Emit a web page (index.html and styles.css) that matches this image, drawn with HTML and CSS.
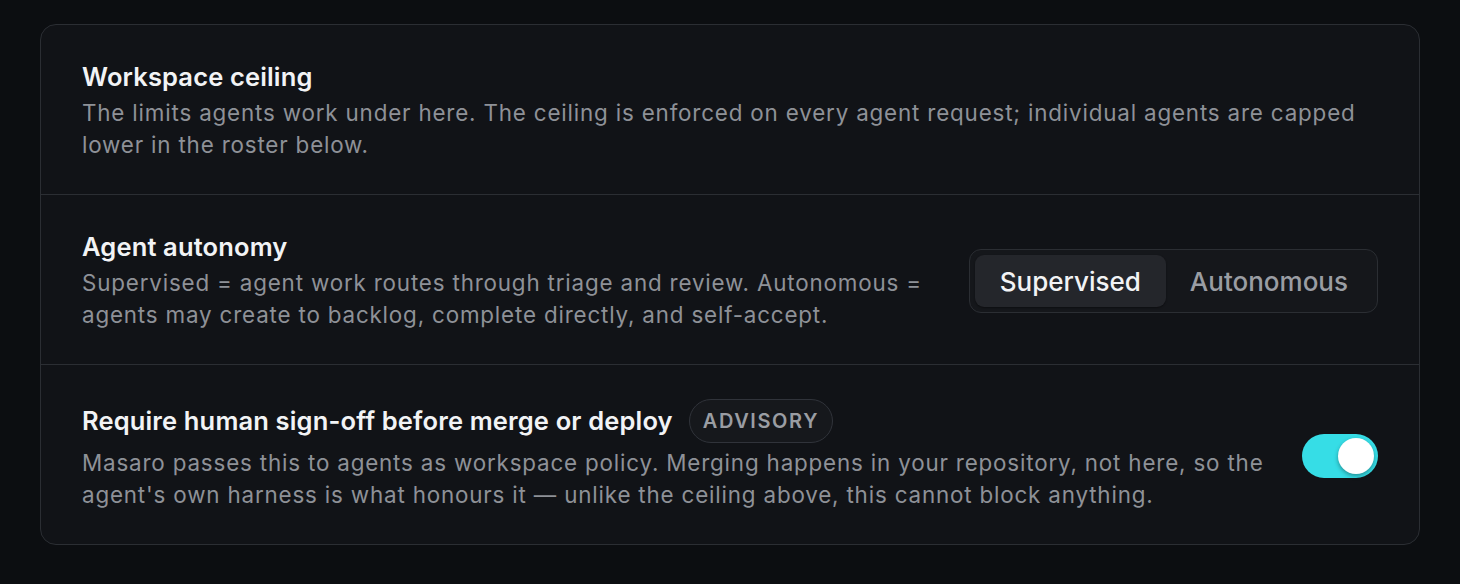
FILE: index.html
```html
<!DOCTYPE html>
<html lang="en">
<head>
<meta charset="utf-8">
<title>Workspace settings</title>
<link rel="stylesheet" href="styles.css">
</head>
<body>
<main class="page">
  <section class="card">
    <div class="row">
      <div class="text">
        <h3 class="title">Workspace ceiling</h3>
        <p class="desc">The limits agents work under here. The ceiling is enforced on every agent request; individual agents are capped lower in the roster below.</p>
      </div>
    </div>
    <div class="row">
      <div class="text narrow">
        <h3 class="title">Agent autonomy</h3>
        <p class="desc">Supervised = agent work routes through triage and review. Autonomous = agents may create to backlog, complete directly, and self-accept.</p>
      </div>
      <div class="segmented">
        <button class="seg active">Supervised</button>
        <button class="seg">Autonomous</button>
      </div>
    </div>
    <div class="row">
      <div class="text">
        <div class="title-line">
          <h3 class="title">Require human sign-off before merge or deploy</h3>
          <span class="badge">ADVISORY</span>
        </div>
        <p class="desc">Masaro passes this to agents as workspace policy. Merging happens in your repository, not here, so the agent's own harness is what honours it — unlike the ceiling above, this cannot block anything.</p>
      </div>
      <div class="toggle on"><span class="knob"></span></div>
    </div>
  </section>
</main>
</body>
</html>
```

FILE: styles.css
```css
* { box-sizing: border-box; }
html, body { margin: 0; padding: 0; }
body {
  background: #0c0e11;
  font-family: Inter, "Noto Sans", sans-serif;
  color: #f0f1f3;
}
.page { padding: 24px 40px; }
.card {
  background: #111317;
  border: 1px solid #2b2e33;
  border-radius: 16px;
  overflow: hidden;
}
.row {
  display: flex;
  align-items: center;
  justify-content: space-between;
  gap: 38px;
  padding: 36px 41px 33px;
  border-top: 1px solid #2b2e33;
}
.row:first-child { border-top: none; }
.text { flex: 1; min-width: 0; }
.text.narrow { max-width: 860px; }
.title {
  margin: 0 0 4px;
  font-size: 25.5px;
  line-height: 32px;
  font-weight: 600;
  letter-spacing: 0.15px;
  color: #f2f3f5;
}
.desc {
  margin: 0;
  font-size: 22.4px;
  line-height: 32px;
  letter-spacing: 0.82px;
  color: #8e9197;
}
.title-line {
  display: flex;
  align-items: center;
  gap: 16px;
  margin: -2px 0 4px;
}
.title-line .title { margin: 0; }
.badge {
  display: inline-flex;
  align-items: center;
  height: 44px;
  padding: 0 13px;
  border: 1px solid #30333a;
  border-radius: 22px;
  background: #16181c;
  color: #9a9da3;
  font-size: 20px;
  font-weight: 600;
  letter-spacing: 0.08em;
}
.segmented {
  display: flex;
  padding: 5px;
  background: #15171b;
  border: 1px solid #2b2e33;
  border-radius: 12px;
  flex-shrink: 0;
}
.seg {
  font-family: inherit;
  font-size: 26px;
  font-weight: 500;
  height: 52px;
  padding: 0 24px;
  border: none;
  border-radius: 9px;
  background: transparent;
  color: #9a9da3;
}
.seg.active {
  padding: 0 25px;
  background: #24262b;
  color: #f2f3f5;
  box-shadow: 0 1px 2px rgba(0,0,0,0.4);
}
.toggle {
  flex-shrink: 0;
  width: 76px;
  height: 44px;
  border-radius: 22px;
  background: #2f3238;
  position: relative;
}
.toggle.on { background: #36dde6; }
.knob {
  position: absolute;
  top: 4px;
  left: 36px;
  width: 36px;
  height: 36px;
  border-radius: 50%;
  background: #ffffff;
  box-shadow: 0 2px 4px rgba(0,0,0,0.35);
}
```
